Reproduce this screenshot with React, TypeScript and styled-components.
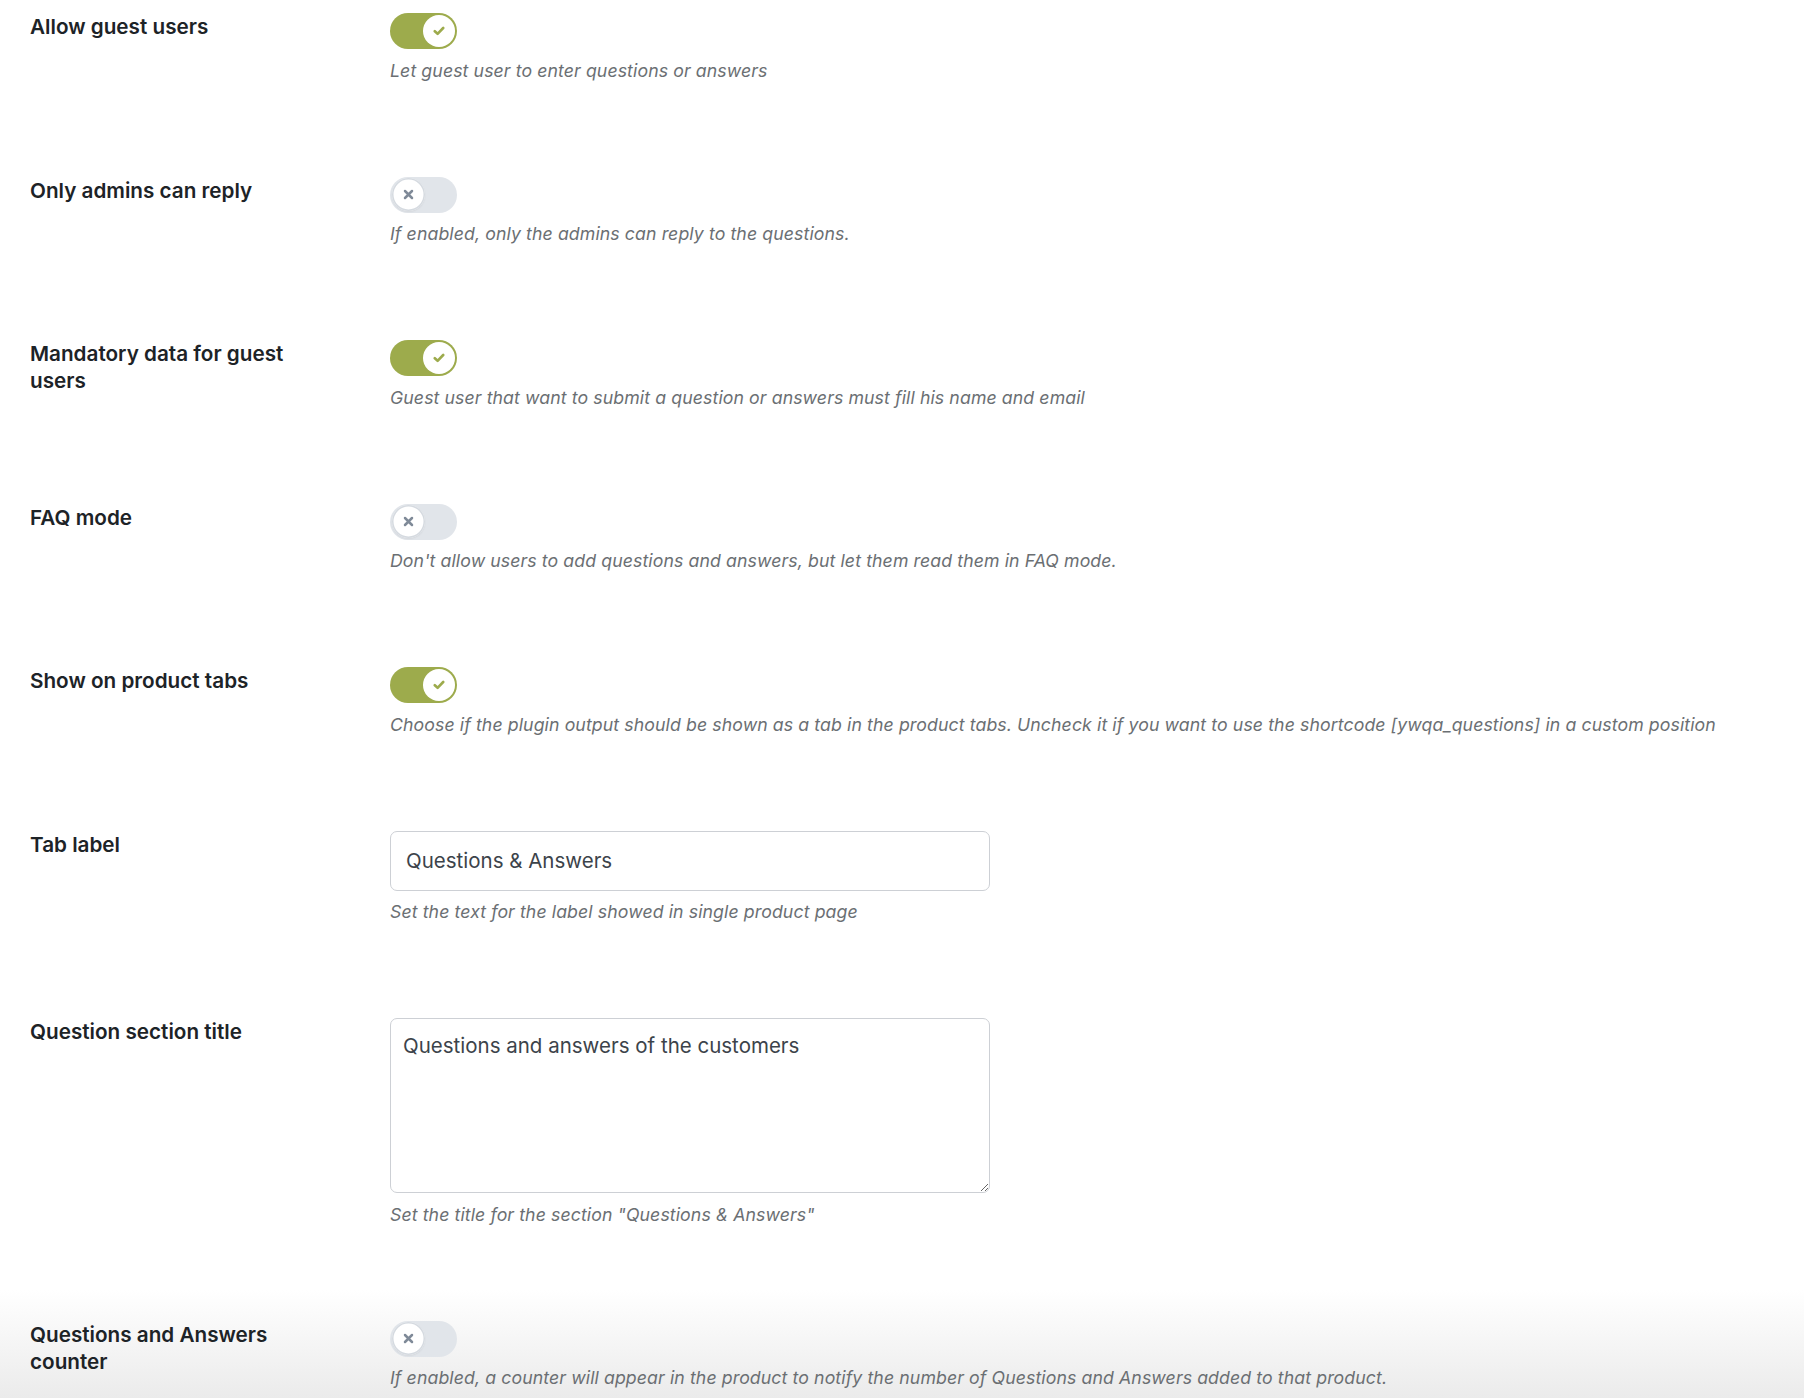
import React from 'react';
import styled, { createGlobalStyle } from 'styled-components';

const GlobalStyle = createGlobalStyle`
  html, body {
    margin: 0;
    padding: 0;
    background: #ffffff;
  }
  * {
    box-sizing: border-box;
  }
`;

const Page = styled.div`
  min-height: 1398px;
  padding: 13px 30px 0 30px;
  display: flex;
  flex-direction: column;
  gap: 94px;
  font-family: 'Inter', 'Noto Sans', sans-serif;
  background: linear-gradient(180deg, #ffffff 0, #ffffff 1290px, #ebebeb 1398px);
`;

const Row = styled.div`
  display: grid;
  grid-template-columns: 360px 1fr;
  align-items: start;
`;

const Label = styled.div`
  width: 280px;
  font-size: 20.7px;
  line-height: 27px;
  font-weight: 600;
  color: #1d2327;
`;

const Field = styled.div`
  display: flex;
  flex-direction: column;
  align-items: flex-start;
`;

const Description = styled.div`
  margin-top: 9.5px;
  font-size: 17.7px;
  line-height: 24px;
  font-style: italic;
  color: #6b6f73;
  letter-spacing: 0.1px;
`;

const Track = styled.div<{ $on: boolean }>`
  width: 67px;
  height: 36px;
  border-radius: 18px;
  background: ${(p) => (p.$on ? '#9dab4c' : '#e1e5ea')};
  display: flex;
  align-items: center;
  justify-content: ${(p) => (p.$on ? 'flex-end' : 'flex-start')};
  padding: ${(p) => (p.$on ? '2px' : '1.5px')};
`;

const Knob = styled.div<{ $on: boolean }>`
  width: ${(p) => (p.$on ? '32px' : '33px')};
  height: ${(p) => (p.$on ? '32px' : '33px')};
  border-radius: 50%;
  background: #ffffff;
  display: flex;
  align-items: center;
  justify-content: center;
  box-shadow: ${(p) => (p.$on ? 'none' : 'inset 0 0 0 1.5px #d5dae0, 0 1px 2px rgba(0,0,0,0.06)')};
`;

const TextInput = styled.input`
  width: 600px;
  height: 60px;
  border: 1px solid #cdd0d5;
  border-radius: 7px;
  padding: 0 15px;
  font-family: 'Inter', 'Noto Sans', sans-serif;
  font-size: 20.5px;
  color: #3c434a;
  background: #fff;
  outline: none;
`;

const TextArea = styled.textarea`
  width: 600px;
  height: 175px;
  border: 1px solid #cdd0d5;
  border-radius: 7px;
  padding: 13px 12px;
  font-family: 'Inter', 'Noto Sans', sans-serif;
  font-size: 20.5px;
  line-height: 28px;
  color: #3c434a;
  background: #fff;
  outline: none;
  resize: both;
`;

const Toggle: React.FC<{ on: boolean }> = ({ on }) => (
  <Track $on={on}>
    <Knob $on={on}>
      {on ? (
        <svg width="12" height="10" viewBox="0 0 12 10">
          <path d="M1.8 5.2 L4.6 7.8 L10.2 2" fill="none" stroke="#9dab4c" strokeWidth="2.6" strokeLinecap="round" strokeLinejoin="round" />
        </svg>
      ) : (
        <svg width="11" height="11" viewBox="0 0 11 11">
          <path d="M2 2 L9 9 M9 2 L2 9" fill="none" stroke="#7f8a98" strokeWidth="2.5" strokeLinecap="round" />
        </svg>
      )}
    </Knob>
  </Track>
);

interface ToggleSetting {
  label: string;
  on: boolean;
  description: string;
}

const topSettings: ToggleSetting[] = [
  { label: 'Allow guest users', on: true, description: 'Let guest user to enter questions or answers' },
  { label: 'Only admins can reply', on: false, description: 'If enabled, only the admins can reply to the questions.' },
  {
    label: 'Mandatory data for guest users',
    on: true,
    description: 'Guest user that want to submit a question or answers must fill his name and email',
  },
  {
    label: 'FAQ mode',
    on: false,
    description: "Don't allow users to add questions and answers, but let them read them in FAQ mode.",
  },
  {
    label: 'Show on product tabs',
    on: true,
    description:
      'Choose if the plugin output should be shown as a tab in the product tabs. Uncheck it if you want to use the shortcode [ywqa_questions] in a custom position',
  },
];

const App: React.FC = () => {
  return (
    <>
      <GlobalStyle />
      <Page>
        {topSettings.map((s) => (
          <Row key={s.label}>
            <Label>{s.label}</Label>
            <Field>
              <Toggle on={s.on} />
              <Description>{s.description}</Description>
            </Field>
          </Row>
        ))}
        <Row>
          <Label>Tab label</Label>
          <Field>
            <TextInput defaultValue="Questions & Answers" />
            <Description>Set the text for the label showed in single product page</Description>
          </Field>
        </Row>
        <Row>
          <Label>Question section title</Label>
          <Field>
            <TextArea defaultValue="Questions and answers of the customers" />
            <Description>Set the title for the section "Questions &amp; Answers"</Description>
          </Field>
        </Row>
        <Row>
          <Label>Questions and Answers counter</Label>
          <Field>
            <Toggle on={false} />
            <Description>
              If enabled, a counter will appear in the product to notify the number of Questions and Answers added to
              that product.
            </Description>
          </Field>
        </Row>
      </Page>
    </>
  );
};

export default App;
